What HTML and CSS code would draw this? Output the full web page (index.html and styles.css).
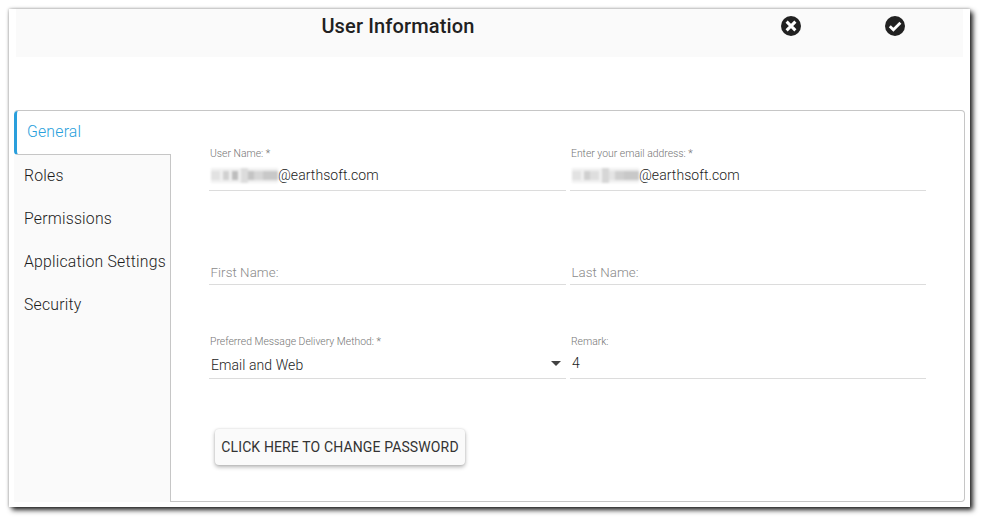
FILE: index.html
```html
<!DOCTYPE html>
<html lang="en">
<head>
<meta charset="utf-8">
<title>User Information</title>
<link rel="stylesheet" href="styles.css">
</head>
<body>
<div class="window">
  <header class="head">
    <h1 class="title">User Information</h1>
    <svg class="icon icon-x" viewBox="0 0 20 20"><circle cx="10" cy="10" r="10" fill="#212121"/><path d="M5.6 5.6l8.8 8.8M14.4 5.6l-8.8 8.8" stroke="#fff" stroke-width="3" fill="none"/></svg>
    <svg class="icon icon-ok" viewBox="0 0 20 20"><circle cx="10" cy="10" r="10" fill="#212121"/><path d="M4.8 10.2l3.6 3.6 7-7" stroke="#fff" stroke-width="2.8" fill="none"/></svg>
  </header>
  <section class="card">
    <nav class="tabs">
      <div class="tab tab-active">General</div>
      <div class="tab-list">
        <div class="tab">Roles</div>
        <div class="tab">Permissions</div>
        <div class="tab">Application Settings</div>
        <div class="tab">Security</div>
      </div>
    </nav>
    <main class="panel">
      <div class="grid">
        <div class="field">
          <label class="label">User Name: *</label>
          <div class="value"><svg class="mosaic" viewBox="0 0 22 5" preserveAspectRatio="none"><rect width="22" height="5" fill="#f1f1f1"/><rect x="0" y="1" width="3" height="3" fill="#e2e2e2"/><rect x="4" y="1" width="2" height="3" fill="#d0d0d0"/><rect x="7" y="1" width="2" height="3" fill="#bdbdbd"/><rect x="10" y="0" width="2" height="5" fill="#dcdcdc"/><rect x="12" y="1" width="2" height="3" fill="#c4c4c4"/><rect x="14" y="1" width="3" height="3" fill="#d6d6d6"/><rect x="17" y="1" width="5" height="3" fill="#c8c8c8"/></svg><span>@earthsoft.com</span></div>
        </div>
        <div class="field">
          <label class="label">Enter your email address: *</label>
          <div class="value"><svg class="mosaic" viewBox="0 0 22 5" preserveAspectRatio="none"><rect width="22" height="5" fill="#f1f1f1"/><rect x="0" y="1" width="3" height="3" fill="#e2e2e2"/><rect x="4" y="1" width="2" height="3" fill="#cfcfcf"/><rect x="6" y="1" width="3" height="3" fill="#dedede"/><rect x="10" y="0" width="2" height="5" fill="#d6d6d6"/><rect x="12" y="1" width="2" height="3" fill="#e4e4e4"/><rect x="14" y="1" width="3" height="3" fill="#cfcfcf"/><rect x="17" y="1" width="5" height="3" fill="#c8c8c8"/></svg><span>@earthsoft.com</span></div>
        </div>
        <div class="field">
          <div class="value placeholder">First Name:</div>
        </div>
        <div class="field">
          <div class="value placeholder">Last Name:</div>
        </div>
        <div class="field">
          <label class="label">Preferred Message Delivery Method: *</label>
          <div class="value value-select"><span>Email and Web</span><i class="caret"></i></div>
        </div>
        <div class="field">
          <label class="label">Remark:</label>
          <div class="value value-num">4</div>
        </div>
      </div>
      <button class="btn" type="button">CLICK HERE TO CHANGE PASSWORD</button>
    </main>
  </section>
</div>
</body>
</html>
```

FILE: styles.css
```css
* { box-sizing: border-box; }
html, body { margin: 0; padding: 0; }
body {
  width: 987px;
  height: 524px;
  background: #fff;
  font-family: Roboto, sans-serif;
  color: #212121;
  overflow: hidden;
  padding: 9px 0 0 9px;
}
.window {
  width: 961px;
  height: 498px;
  background: #fff;
  padding: 0 5px 5px 5px;
  box-shadow: 0 0 3px rgba(0,0,0,.35), 3px 3px 5px rgba(0,0,0,.85);
  display: flex;
  flex-direction: column;
}
.head {
  height: 48px;
  margin: 0 2px 53px 2px;
  background: #fafafa;
  position: relative;
  flex: none;
}
.title {
  margin: 0;
  position: absolute;
  left: 0;
  width: 764px;
  top: 5px;
  text-align: center;
  font-size: 20px;
  line-height: 24px;
  font-weight: 500;
  letter-spacing: .15px;
}
.icon { position: absolute; top: 7px; width: 20px; height: 20px; }
.icon-x { left: 765px; }
.icon-ok { left: 869px; }
.card {
  flex: 1;
  display: flex;
  border: 1px solid #c6c6c6;
  border-left: 0;
  border-radius: 4px;
  min-height: 0;
}
.tabs {
  width: 157px;
  flex: none;
  display: flex;
  flex-direction: column;
  font-size: 15.8px;
  font-weight: 300;
  letter-spacing: .2px;
  color: #1c1c1c;
  margin-bottom: -1px;
  position: relative;
}
.tab {
  height: 43px;
  padding-left: 10px;
  line-height: 41px;
  white-space: nowrap;
}
.tab-active {
  height: 44px;
  color: #2a9fdc;
  border-left: 3px solid #2a9fdc;
  border-bottom: 1px solid #c6c6c6;
  border-radius: 4px 0 0 4px;
  padding-left: 10px;
  line-height: 42px;
}
.tab-list {
  flex: 1;
  background: #fafafa;
  border-right: 1px solid #c6c6c6;
}
.panel {
  flex: 1;
  padding: 34px 38px 0 38px;
  min-width: 0;
}
.grid {
  display: grid;
  grid-template-columns: 357px 356px;
  column-gap: 4px;
  grid-auto-rows: 46px;
  row-gap: 48px;
}
.field {
  position: relative;
  border-bottom: 1px solid #dcdcdc;
  display: flex;
  flex-direction: column;
  justify-content: flex-end;
}
.label {
  position: absolute;
  top: 2px;
  left: 1px;
  font-size: 10.4px;
  line-height: 14px;
  font-weight: 300;
  color: #757575;
  white-space: nowrap;
}
.value {
  height: 30px;
  padding: 0 2px;
  display: flex;
  align-items: center;
  font-size: 14px;
  line-height: 30px;
  font-weight: 300;
  letter-spacing: .07px;
  color: #1c1c1c;
  position: relative;
  top: 0;
}
.placeholder { color: #8a8a8a; font-size: 13.3px; top: 4px; padding-left: 1.5px; }
.mosaic { width: 67px; height: 15px; flex: none; display: block; shape-rendering: crispEdges; filter: blur(1px); }
.value-select { justify-content: space-between; padding-right: 5px; top: 2px; }
.value-num { top: 0; }
.caret {
  width: 0;
  height: 0;
  margin-top: -3px;
  border-left: 5px solid transparent;
  border-right: 5px solid transparent;
  border-top: 5px solid #424242;
}
.btn {
  display: block;
  margin: 50px 0 0 6px;
  width: 250px;
  height: 36px;
  padding: 0;
  border: 0;
  border-radius: 4px;
  background: #fafafa;
  font-family: Roboto, sans-serif;
  font-size: 14px;
  font-weight: 400;
  letter-spacing: .13px;
  color: #333;
  box-shadow: 0 2px 4px rgba(0,0,0,.3), 0 0 2px rgba(0,0,0,.12);
}
```
